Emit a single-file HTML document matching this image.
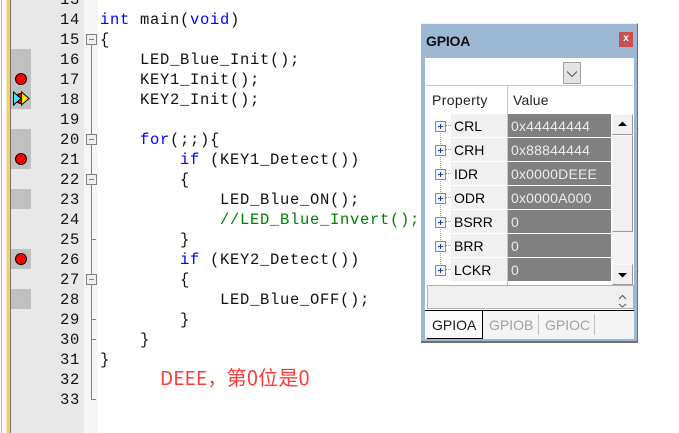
<!DOCTYPE html>
<html><head><meta charset="utf-8">
<style>
html,body{margin:0;padding:0;background:#fff;}
#r{position:relative;width:679px;height:433px;overflow:hidden;background:#fff;font-family:"Liberation Sans",sans-serif;}
#r div{position:absolute;}
.c{font:15.5px/20px "Liberation Mono",monospace;letter-spacing:.7px;white-space:pre;color:#111;height:20px;margin-top:1px;}
.n{left:40px;width:40px;text-align:right;margin-top:-1px;}
.k{color:#0000ff}.g{color:#008000}
.b{left:11px;width:20px;background:#c0c0c0;}
.t{font-size:14px;line-height:24px;white-space:pre;}
.nm{left:451px;width:56px;height:23px;background:#f0f0f0;color:#000;text-indent:3px;}
.v{left:508px;width:103px;height:23px;background:#808080;color:#ececec;text-indent:3px;letter-spacing:.2px;}
.sb{background:#f0f0f0;border:1px solid #9a9a9a;border-top-color:#f8f8f8;border-left-color:#f8f8f8;box-sizing:border-box;}
.ex{left:435px;width:9px;height:9px;border:1px solid #8a8a8a;background:#f4f4f4;box-sizing:content-box;}
.ex:before{content:"";position:absolute;left:2px;top:4px;width:5px;height:1px;background:#1c3c90;}
.ex:after{content:"";position:absolute;left:4px;top:2px;width:1px;height:5px;background:#1c3c90;}
.dh{left:446px;width:5px;height:0;border-top:1px dotted #a0a0a0;}
.fb{left:86px;width:9px;height:9px;border:1px solid #808080;background:#eee;}
.fb:after{content:"";position:absolute;left:2px;top:4px;width:5px;height:1px;background:#808080;}
.ft{left:91px;width:5px;height:1px;background:#808080;}
</style></head><body>
<div id="r">
<div style="left:1px;top:0;width:1px;height:433px;background:#b8b8b8"></div>
<div style="left:6px;top:0;width:1px;height:433px;background:#efe0b8"></div>
<div style="left:7px;top:0;width:3px;height:433px;background:#f8cf70"></div>
<div style="left:10px;top:0;width:1px;height:433px;background:#707070"></div>
<div style="left:11px;top:0;width:73px;height:433px;background:#e8e8e8"></div>
<div style="left:84px;top:0;width:14px;height:433px;background:#f6f6f6"></div>
<div class="b" style="top:49px;height:60px"></div>
<div class="b" style="top:129px;height:40px"></div>
<div class="b" style="top:189px;height:20px"></div>
<div class="b" style="top:249px;height:20px"></div>
<div class="b" style="top:289px;height:20px"></div>
<svg style="position:absolute;left:0;top:0" width="40" height="280">
<g fill="#f00" stroke="#000"><circle cx="21" cy="79" r="5.5"/><circle cx="21" cy="159" r="5.5"/><circle cx="21" cy="259" r="5.5"/><circle cx="21" cy="98.500" r="5"/></g>
<path d="M13.500 92V105L21 98.500Z" fill="#40e8f8" stroke="#000"/><path d="M21.500 92V105L29 98.500Z" fill="#ffe800" stroke="#000"/>
</svg>
<div class="c n" style="top:-9px">13</div><div class="c n" style="top:11px">14</div><div class="c n" style="top:31px">15</div><div class="c n" style="top:51px">16</div><div class="c n" style="top:71px">17</div><div class="c n" style="top:91px">18</div><div class="c n" style="top:111px">19</div><div class="c n" style="top:131px">20</div><div class="c n" style="top:151px">21</div><div class="c n" style="top:171px">22</div><div class="c n" style="top:191px">23</div><div class="c n" style="top:211px">24</div><div class="c n" style="top:231px">25</div><div class="c n" style="top:251px">26</div><div class="c n" style="top:271px">27</div><div class="c n" style="top:291px">28</div><div class="c n" style="top:311px">29</div><div class="c n" style="top:331px">30</div><div class="c n" style="top:351px">31</div><div class="c n" style="top:371px">32</div><div class="c n" style="top:391px">33</div>
<div style="left:91px;top:34px;width:1px;height:365px;background:#808080"></div>
<div class="fb" style="top:34px"></div><div class="fb" style="top:134px"></div><div class="fb" style="top:174px"></div><div class="fb" style="top:274px"></div>
<div class="ft" style="top:239px"></div><div class="ft" style="top:319px"></div><div class="ft" style="top:339px"></div><div class="ft" style="top:399px"></div>
<div class="c" style="left:100px;top:9px"><span class="k">int</span> main(<span class="k">void</span>)</div>
<div class="c" style="left:100px;top:29px">{</div>
<div class="c" style="left:140px;top:49px">LED_Blue_Init();</div>
<div class="c" style="left:140px;top:69px">KEY1_Init();</div>
<div class="c" style="left:140px;top:89px">KEY2_Init();</div>
<div class="c" style="left:140px;top:129px"><span class="k">for</span>(;;){</div>
<div class="c" style="left:180px;top:149px"><span class="k">if</span> (KEY1_Detect())</div>
<div class="c" style="left:180px;top:169px">{</div>
<div class="c" style="left:220px;top:189px">LED_Blue_ON();</div>
<div class="c g" style="left:220px;top:209px">//LED_Blue_Invert();</div>
<div class="c" style="left:180px;top:229px">}</div>
<div class="c" style="left:180px;top:249px"><span class="k">if</span> (KEY2_Detect())</div>
<div class="c" style="left:180px;top:269px">{</div>
<div class="c" style="left:220px;top:289px">LED_Blue_OFF();</div>
<div class="c" style="left:180px;top:309px">}</div>
<div class="c" style="left:140px;top:329px">}</div>
<div class="c" style="left:100px;top:349px">}</div>
<div style="left:160px;top:364px;font:19px/26px 'Noto Sans CJK SC',sans-serif;letter-spacing:.2px;color:#ff3838;white-space:pre">DEEE，<span style="font-size:20px">第0位是0</span></div>

<div style="left:421px;top:23px;width:217px;height:320px;background:#9db8d4;border-right:1px solid #707070;border-bottom:2px solid #707070;box-sizing:border-box;border-top:1px solid #f0f0f0"></div>
<div style="left:426px;top:33px;font:bold 14px/16px 'Liberation Sans',sans-serif;color:#101010;letter-spacing:-.2px">GPIOA</div>
<div style="left:619px;top:32px;width:14px;height:15px;background:#c75050;color:#fff;font:bold 10px/14px 'Liberation Sans',sans-serif;text-align:center">x</div>
<div style="left:425px;top:58px;width:209px;height:281px;background:#fff"></div>
<div style="left:563px;top:62px;width:18px;height:22px;background:#e4e4e4;border:1px solid #a0a0a0;box-sizing:border-box"></div>
<svg style="position:absolute;left:566px;top:70px" width="12" height="8"><path d="M1 1.500L6 6.500L11 1.500" fill="none" stroke="#555"/></svg>
<div style="left:426px;top:85px;width:207px;height:1px;background:#c8c8c8"></div>
<div style="left:507px;top:86px;width:1px;height:199px;background:#c8c8c8"></div>
<div class="t" style="left:432px;top:88px;color:#222;letter-spacing:.35px">Property</div>
<div class="t" style="left:513px;top:88px;color:#222;letter-spacing:.2px">Value</div>
<div style="left:440px;top:130px;width:0;height:140px;border-left:1px dotted #a0a0a0"></div>

<div class="t nm" style="top:114px">CRL</div><div class="t v" style="top:114px">0x44444444</div>
<div class="t nm" style="top:138px">CRH</div><div class="t v" style="top:138px">0x88844444</div>
<div class="t nm" style="top:162px">IDR</div><div class="t v" style="top:162px">0x0000DEEE</div>
<div class="t nm" style="top:186px">ODR</div><div class="t v" style="top:186px">0x0000A000</div>
<div class="t nm" style="top:210px">BSRR</div><div class="t v" style="top:210px">0</div>
<div class="t nm" style="top:234px">BRR</div><div class="t v" style="top:234px">0</div>
<div class="t nm" style="top:258px">LCKR</div><div class="t v" style="top:258px">0</div>
<div class="ex" style="top:121px"></div><div class="dh" style="top:125px"></div>
<div class="ex" style="top:145px"></div><div class="dh" style="top:149px"></div>
<div class="ex" style="top:169px"></div><div class="dh" style="top:173px"></div>
<div class="ex" style="top:193px"></div><div class="dh" style="top:197px"></div>
<div class="ex" style="top:217px"></div><div class="dh" style="top:221px"></div>
<div class="ex" style="top:241px"></div><div class="dh" style="top:245px"></div>
<div class="ex" style="top:265px"></div><div class="dh" style="top:269px"></div>

<div style="left:612px;top:114px;width:21px;height:171px;background:#f4f4f4"></div>
<div class="sb" style="left:612px;top:114px;width:21px;height:21px"></div>
<div class="sb" style="left:612px;top:135px;width:21px;height:97px"></div>
<div class="sb" style="left:612px;top:264px;width:21px;height:21px"></div>
<svg style="position:absolute;left:612px;top:114px" width="21" height="171"><path d="M6 12H15L10.500 7.500Z M6 159H15L10.500 163.500Z" fill="#000"/></svg>

<div style="left:427px;top:285px;width:207px;height:24px;background:#f0f0f0;border:1px solid #b0b0b0;box-sizing:border-box"></div>
<svg style="position:absolute;left:612px;top:291px" width="21" height="17"><path d="M7 8L10.500 4.500L14 8M7 13L10.500 16L14 13" fill="none" stroke="#555"/></svg>
<div style="left:425px;top:310px;width:209px;height:29px;background:#f4f4f4"></div>
<div style="left:425px;top:310px;width:209px;height:1px;background:#000"></div>
<div style="left:482px;top:310px;width:1px;height:29px;background:#000"></div>
<div style="left:427px;top:338px;width:56px;height:1px;background:#000"></div>
<div style="left:425px;top:311px;width:57px;height:27px;background:#fafafa"></div>
<div style="left:538px;top:314px;width:1px;height:21px;background:#c0c0c0"></div>
<div style="left:594px;top:314px;width:1px;height:21px;background:#c0c0c0"></div>
<div class="t" style="left:432px;top:313px;color:#1a1a1a">GPIOA</div>
<div class="t" style="left:489px;top:313px;color:#a0a0a0">GPIOB</div>
<div class="t" style="left:545px;top:313px;color:#a0a0a0">GPIOC</div>
</div>
</body></html>
